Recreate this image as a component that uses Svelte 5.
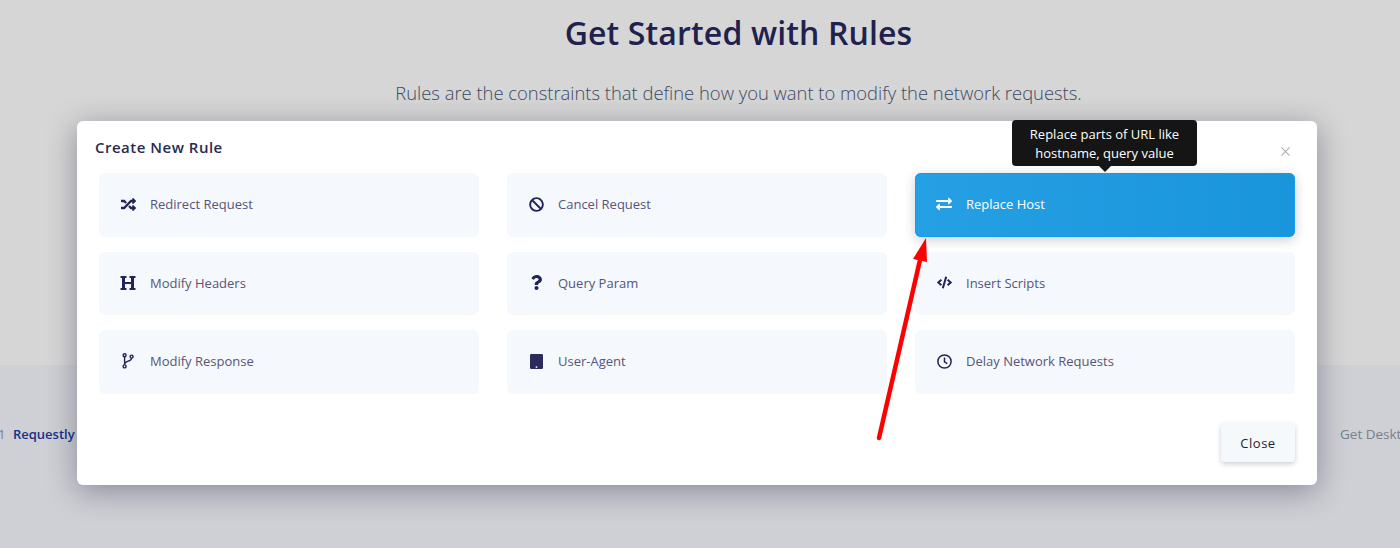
<script lang="ts">
  const ICONS: Record<string, { box: string; d: string }> = {
    random: {
      box: "0 0 512 512",
      d: "M504.971 359.029c9.373 9.373 9.373 24.569 0 33.941l-80 79.984c-15.01 15.01-40.971 4.49-40.971-16.971V416h-58.785a12.004 12.004 0 0 1-8.773-3.812l-70.556-75.596 53.333-57.143L352 336h32v-39.981c0-21.438 25.943-31.998 40.971-16.971l80 79.981zM12 176h84l52.781 56.551 53.333-57.143-70.556-75.596A11.999 11.999 0 0 0 122.785 96H12c-6.627 0-12 5.373-12 12v56c0 6.627 5.373 12 12 12zm372 0v39.984c0 21.46 25.961 31.98 40.971 16.971l80-79.984c9.373-9.373 9.373-24.569 0-33.941l-80-79.981C409.943 24.021 384 34.582 384 56.019V96h-58.785a12.004 12.004 0 0 0-8.773 3.812L96 336H12c-6.627 0-12 5.373-12 12v56c0 6.627 5.373 12 12 12h110.785c3.326 0 6.503-1.381 8.773-3.812L352 176h32z",
    },
    ban: {
      box: "0 0 512 512",
      d: "M256 8C119.034 8 8 119.033 8 256s111.034 248 248 248 248-111.034 248-248S392.967 8 256 8zm130.108 117.892c65.448 65.448 70 165.481 20.677 235.637L150.47 105.216c70.204-49.356 170.226-44.735 235.638 20.676zM125.892 386.108c-65.448-65.448-70-165.481-20.677-235.637L361.53 406.784c-70.203 49.356-170.226 44.736-235.638-20.676z",
    },
    exchange: {
      box: "0 0 512 512",
      d: "M0 168v-16c0-13.255 10.745-24 24-24h360V80c0-21.367 25.899-32.042 40.971-16.971l80 80c9.372 9.373 9.372 24.569 0 33.941l-80 80C409.956 271.982 384 261.456 384 240v-48H24c-13.255 0-24-10.745-24-24zm488 152H128v-48c0-21.314-25.862-32.08-40.971-16.971l-80 80c-9.372 9.373-9.372 24.569 0 33.941l80 80C102.057 463.997 128 453.437 128 432v-48h360c13.255 0 24-10.745 24-24v-16c0-13.255-10.745-24-24-24z",
    },
    heading: {
      box: "0 0 512 512",
      d: "M448 96v320h40a8 8 0 0 1 8 8v48a8 8 0 0 1-8 8H312a8 8 0 0 1-8-8v-48a8 8 0 0 1 8-8h40V288H160v128h40a8 8 0 0 1 8 8v48a8 8 0 0 1-8 8H24a8 8 0 0 1-8-8v-48a8 8 0 0 1 8-8h40V96H24a8 8 0 0 1-8-8V40a8 8 0 0 1 8-8h176a8 8 0 0 1 8 8v48a8 8 0 0 1-8 8h-40v128h192V96h-40a8 8 0 0 1-8-8V40a8 8 0 0 1 8-8h176a8 8 0 0 1 8 8v48a8 8 0 0 1-8 8z",
    },
    question: {
      box: "0 0 384 512",
      d: "M202.021 0C122.202 0 70.503 32.703 29.914 91.026c-7.363 10.58-5.093 25.086 5.178 32.874l43.138 32.709c10.373 7.865 25.132 6.026 33.253-4.148 25.049-31.381 43.63-49.449 82.757-49.449 30.764 0 68.816 19.799 68.816 49.631 0 22.552-18.617 34.134-48.993 51.164-35.423 19.86-82.299 44.576-82.299 106.405V320c0 13.255 10.745 24 24 24h72.471c13.255 0 24-10.745 24-24v-5.773c0-42.86 125.268-44.645 125.268-160.627C377.504 66.256 286.902 0 202.021 0zM192 373.459c-38.196 0-69.271 31.075-69.271 69.271 0 38.195 31.075 69.27 69.271 69.27s69.271-31.075 69.271-69.271-31.075-69.27-69.271-69.27z",
    },
    code: {
      box: "0 0 640 512",
      d: "M278.9 511.5l-61-17.7c-6.4-1.8-10-8.5-8.2-14.9L346.2 8.7c1.8-6.4 8.5-10 14.9-8.2l61 17.7c6.4 1.8 10 8.5 8.2 14.9L293.8 503.3c-1.9 6.4-8.5 10.1-14.9 8.2zm-114-112.2l43.5-46.4c4.6-4.9 4.3-12.7-.8-17.2L117 256l90.6-79.7c5.1-4.5 5.5-12.3.8-17.2l-43.5-46.4c-4.5-4.8-12.1-5.1-17-.5L3.8 247.2c-5.1 4.7-5.1 12.8 0 17.5l144.1 135.1c4.9 4.6 12.5 4.4 17-.5zm327.2.6l144.1-135.1c5.1-4.7 5.1-12.8 0-17.5L492.1 112.1c-4.8-4.5-12.4-4.3-17 .5L431.6 159c-4.6 4.9-4.3 12.7.8 17.2L523 256l-90.6 79.7c-5.1 4.5-5.5 12.3-.8 17.2l43.5 46.4c4.5 4.9 12.1 5.1 17 .6z",
    },
  }

  const RULES = [
    { name: "Redirect Request", icon: "random", size: 15 },
    { name: "Cancel Request", icon: "ban", size: 15 },
    { name: "Replace Host", icon: "exchange", size: 16, active: true },
    { name: "Modify Headers", icon: "heading", size: 16 },
    { name: "Query Param", icon: "question", size: 15 },
    { name: "Insert Scripts", icon: "code", size: 15 },
    { name: "Modify Response", icon: "branch", size: 15 },
    { name: "User-Agent", icon: "tablet", size: 15 },
    { name: "Delay Network Requests", icon: "clock", size: 15 },
  ]
</script>

<div class="page">
  <section class="hero">
    <h1>Get Started with Rules</h1>
    <p>Rules are the constraints that define how you want to modify the network requests.</p>
  </section>
  <footer class="foot">
    <span class="foot-left"><span class="year">1</span><a href="#top">Requestly</a></span>
    <span class="foot-right">Get Desktop App</span>
  </footer>

  <div class="modal" role="dialog" aria-label="Create New Rule">
    <div class="modal-head">
      <h4>Create New Rule</h4>
      <button class="btn-x" aria-label="Close">
        <svg width="9" height="9" viewBox="0 0 10 10" fill="none" stroke="currentColor" stroke-width="1.2">
          <line x1="0.5" y1="0.5" x2="9.5" y2="9.5" /><line x1="9.5" y1="0.5" x2="0.5" y2="9.5" />
        </svg>
      </button>
    </div>

    <div class="grid">
      {#each RULES as rule}
        <div class="card" class:active={rule.active}>
          {#if rule.active}
            <div class="tip">Replace parts of URL like<br />hostname, query value</div>
          {/if}
          <span class="icon">
            {#if rule.icon === "branch"}
              <svg width="15" height="16" viewBox="0 0 15 16" fill="none" stroke="currentColor" stroke-width="1.4">
                <circle cx="3.6" cy="2.2" r="1.5" /><circle cx="3.6" cy="13.4" r="1.5" /><circle cx="10.6" cy="3.6" r="1.5" />
                <path d="M3.6 3.8v8M10.6 5.2c0 3.4-7 2.6-7 6" />
              </svg>
            {:else if rule.icon === "tablet"}
              <svg width="13" height="15" viewBox="0 0 13 15">
                <rect width="13" height="15" rx="1.2" fill="#2b2a5c" /><rect x="5.7" y="12.4" width="1.6" height="1.4" fill="#fff" />
              </svg>
            {:else if rule.icon === "clock"}
              <svg width="15" height="15" viewBox="0 0 15 15" fill="none" stroke="currentColor" stroke-width="1.5">
                <circle cx="7.5" cy="7.5" r="6.6" /><path d="M7.5 3.6v4.2l2.8 1.9" />
              </svg>
            {:else}
              <svg width={rule.size} height={rule.size} viewBox={ICONS[rule.icon].box} fill="currentColor">
                <path d={ICONS[rule.icon].d} />
              </svg>
            {/if}
          </span>
          <span class="label">{rule.name}</span>
        </div>
      {/each}
    </div>

    <div class="modal-foot">
      <button class="btn-close">Close</button>
    </div>
  </div>

  <svg class="arrow" width="60" height="210" viewBox="0 0 60 210">
    <line x1="3" y1="203" x2="44" y2="25" stroke="#ff0000" stroke-width="4.5" stroke-linecap="round" />
    <polygon points="50,3 37,24 51,27" fill="#ff0000" />
  </svg>
</div>

<style>
  :global(body) {
    margin: 0;
    background: #cfd0d5;
    font-family: "Open Sans", "Liberation Sans", sans-serif;
  }

  .page {
    position: relative;
    width: 1400px;
    height: 548px;
    overflow: hidden;
  }

  .hero {
    height: 365px;
    box-sizing: border-box;
    background: #d6d6d6;
    text-align: center;
    padding: 11px 0 0 77px;
  }

  .hero h1 {
    margin: 0;
    font-size: 32px;
    line-height: 44px;
    font-weight: 600;
    letter-spacing: 0.14px;
    color: #20214d;
  }

  .hero p {
    margin: 26px 0 0;
    font-size: 18.4px;
    line-height: 24px;
    font-weight: 300;
    color: #3d4a66;
  }

  .foot {
    display: flex;
    justify-content: space-between;
    height: 183px;
    box-sizing: border-box;
    padding-top: 59px;
    font-size: 13px;
    line-height: 20px;
    background: #cfd0d5;
  }

  .year {
    color: #74818f;
    margin: 0 7.5px 0 -2px;
  }

  .foot-left a {
    color: #12308c;
    font-weight: 600;
    text-decoration: none;
  }

  .foot-right {
    width: 60px;
    overflow: hidden;
    white-space: nowrap;
    font-size: 13.5px;
    color: #74818f;
  }

  .modal {
    position: absolute;
    left: 77px;
    top: 121px;
    width: 1240px;
    height: 364px;
    box-sizing: border-box;
    padding: 15px 22px 0;
    background: #fff;
    border-radius: 6px;
    box-shadow: 0 6px 30px rgba(30, 30, 60, 0.4);
    display: flex;
    flex-direction: column;
  }

  .modal-head {
    display: flex;
    justify-content: space-between;
    align-items: center;
    height: 22px;
    margin-left: -4px;
  }

  .modal-head h4 {
    margin: 0;
    font-size: 15px;
    font-weight: 550;
    letter-spacing: 0.5px;
    color: #2b2a52;
  }

  .btn-x {
    background: none;
    border: none;
    padding: 0;
    margin: 8px 5px 0 0;
    color: #a9adb3;
    display: flex;
  }

  .grid {
    display: grid;
    grid-template-columns: repeat(3, 380px);
    grid-auto-rows: 63.5px;
    column-gap: 28px;
    row-gap: 15px;
    margin-top: 15px;
  }

  .card {
    position: relative;
    display: flex;
    align-items: center;
    box-sizing: border-box;
    padding: 0 0 1px 21px;
    background: #f5f8fc;
    border-radius: 6px;
    font-size: 13px;
    color: #55557a;
  }

  .card.active {
    background: linear-gradient(90deg, #26a0e4, #1995dc);
    color: #fff;
    box-shadow: inset 0 0 0 1px #149be9, 0 3px 12px rgba(20, 30, 60, 0.22);
  }

  .icon {
    width: 16px;
    display: flex;
    justify-content: center;
    margin-right: 14px;
    color: #22235a;
  }

  .active .icon {
    color: #fff;
  }

  .tip {
    position: absolute;
    left: 97px;
    top: -53px;
    width: 185px;
    height: 46px;
    box-sizing: border-box;
    padding-top: 5px;
    background: #151515;
    border-radius: 4px;
    color: #fff;
    font-size: 13px;
    line-height: 19px;
    text-align: center;
  }

  .tip::after {
    content: "";
    position: absolute;
    left: 87px;
    bottom: -6px;
    border-left: 6px solid transparent;
    border-right: 6px solid transparent;
    border-top: 6px solid #151515;
  }

  .modal-foot {
    display: flex;
    justify-content: flex-end;
    margin-top: 29.5px;
  }

  .btn-close {
    width: 74px;
    height: 39px;
    border: none;
    border-radius: 4px;
    background: #f6f9fc;
    color: #1f1f26;
    font-family: inherit;
    font-size: 13px;
    font-weight: 500;
    letter-spacing: 0.5px;
    box-shadow: 0 2px 5px rgba(20, 30, 60, 0.22);
  }

  .arrow {
    position: absolute;
    left: 876px;
    top: 235px;
  }
</style>
